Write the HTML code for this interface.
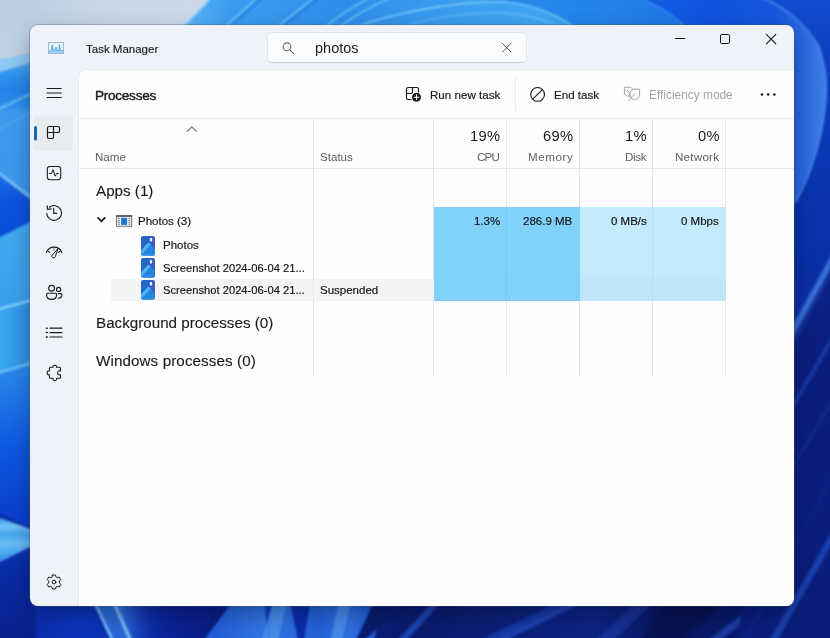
<!DOCTYPE html>
<html>
<head>
<meta charset="utf-8">
<title>Task Manager</title>
<style>
*{box-sizing:border-box;margin:0;padding:0}
html,body{width:830px;height:638px;overflow:hidden;background:#0a2aa0}
body{position:relative;font-family:"Liberation Sans",sans-serif;color:#1b1b1b}
.abs{position:absolute}
.t{position:absolute;white-space:nowrap;line-height:1;will-change:transform}
#wall{position:absolute;left:0;top:0;width:830px;height:638px}
#win{position:absolute;left:30px;top:25px;width:764px;height:581px;border-radius:8px;background:#eff3f9;
 box-shadow:0 0 0 1px rgba(70,85,105,.32),0 9px 22px rgba(0,0,20,.30)}
#content{position:absolute;left:78px;top:69px;width:716px;height:537px;background:#fefefe;border-radius:8px 0 8px 0;
 border-left:1px solid #e6eaf0;border-top:1px solid #e6eaf0}
.hl{position:absolute;height:1px;background:#e8e8e8}
.vl{position:absolute;width:1px;background:#e6e6e6}
.hd{font-size:11.6px;color:#5e5e5e}
.pc{font-size:14.7px;color:#1a1a1a;letter-spacing:.35px}
.rw{font-size:11.5px;color:#151515;-webkit-text-stroke:.18px #151515}
.sc{font-size:11.2px}
.sec{font-size:15.2px;color:#1a1a1a;-webkit-text-stroke:.12px #1a1a1a}
</style>
</head>
<body>
<!-- WALLPAPER -->
<svg id="wall" viewBox="0 0 830 638">
<defs>
<filter id="b1" color-interpolation-filters="sRGB" x="-5%" y="-5%" width="110%" height="110%"><feGaussianBlur stdDeviation="0.8"/></filter>
<filter id="b2" color-interpolation-filters="sRGB" x="-5%" y="-5%" width="110%" height="110%"><feGaussianBlur stdDeviation="1.6"/></filter>
<filter id="b4" color-interpolation-filters="sRGB" x="-10%" y="-10%" width="120%" height="120%"><feGaussianBlur stdDeviation="4"/></filter>
<linearGradient id="lg1" x1="0" x2="0" y1="0" y2="1"><stop offset="0" stop-color="#b9cde1"/><stop offset="1" stop-color="#c2d3e5"/></linearGradient>
<linearGradient id="lg3" x1="0" x2="0" y1="0" y2="1"><stop offset="0" stop-color="#4aa6f2"/><stop offset=".1" stop-color="#2e94ee"/><stop offset=".2" stop-color="#2482ea"/><stop offset=".3" stop-color="#2a8cec"/><stop offset=".36" stop-color="#3d9cf0"/><stop offset="1" stop-color="#3a96ed"/></linearGradient>
<linearGradient id="lg5" x1="0" x2="0" y1="0" y2="1"><stop offset="0" stop-color="#1d6ce6"/><stop offset=".4" stop-color="#0c55e0"/><stop offset="1" stop-color="#0a4cdc"/></linearGradient>
<linearGradient id="lg6" x1="0" x2="0" y1="0" y2="1"><stop offset="0" stop-color="#43aaf1"/><stop offset="1" stop-color="#389fee"/></linearGradient>
<linearGradient id="lg8" x1="0" x2="1" y1="0" y2="0"><stop offset="0" stop-color="#3aaaf1"/><stop offset="1" stop-color="#2a8ae3"/></linearGradient>
<linearGradient id="lg10" x1="0" x2="0" y1="0" y2="1"><stop offset="0" stop-color="#2b8ceb"/><stop offset=".5" stop-color="#0e58e2"/><stop offset="1" stop-color="#083ac8"/></linearGradient>
<linearGradient id="lg11" x1="0" x2="0" y1="0" y2="1"><stop offset="0" stop-color="#2a80e6"/><stop offset=".18" stop-color="#74c6f7"/><stop offset=".36" stop-color="#46a6ef"/><stop offset=".55" stop-color="#6abef5"/><stop offset=".75" stop-color="#4aa6ef"/><stop offset="1" stop-color="#2a7ce2"/></linearGradient>
<linearGradient id="lg12" x1="0" x2="0" y1="0" y2="1"><stop offset="0" stop-color="#0b36b6"/><stop offset=".35" stop-color="#0a2aa2"/><stop offset="1" stop-color="#081f88"/></linearGradient>

<linearGradient id="tgrey" x1="0" x2="1" y1="0" y2="0"><stop offset="0" stop-color="#bccfe2"/><stop offset=".4" stop-color="#c8d7e6"/><stop offset="1" stop-color="#ccdbe9"/></linearGradient>
<linearGradient id="tblue" gradientUnits="userSpaceOnUse" x1="185" x2="830" y1="0" y2="0">
 <stop offset="0" stop-color="#5cb4f5"/><stop offset=".07" stop-color="#3a9cef"/><stop offset=".25" stop-color="#2d8eea"/><stop offset=".42" stop-color="#3a9ef0"/><stop offset=".55" stop-color="#40a6f2"/>
 <stop offset=".59" stop-color="#3ca2f1"/><stop offset=".615" stop-color="#2686ea"/><stop offset=".77" stop-color="#1c76e6"/><stop offset="1" stop-color="#1c76e6"/></linearGradient>
<linearGradient id="tdeep" gradientUnits="userSpaceOnUse" x1="650" x2="830" y1="0" y2="0">
 <stop offset="0" stop-color="#145ce3"/><stop offset=".35" stop-color="#1052dd"/><stop offset=".7" stop-color="#1656dc"/><stop offset=".85" stop-color="#2a6ae2"/><stop offset="1" stop-color="#4682e8"/></linearGradient>
<linearGradient id="trc" x1="0" x2="0" y1="0" y2="1"><stop offset="0" stop-color="#104cd0"/><stop offset="1" stop-color="#0c40c2"/></linearGradient>
<linearGradient id="rarc" gradientUnits="userSpaceOnUse" x1="794" x2="828" y1="0" y2="0"><stop offset="0" stop-color="#1a5cdc"/><stop offset=".6" stop-color="#2a6ce0"/><stop offset="1" stop-color="#4c8cea"/></linearGradient>
<linearGradient id="rdeep" x1="0" x2="0" y1="0" y2="1"><stop offset="0" stop-color="#0e48cc"/><stop offset=".15" stop-color="#0a3cbc"/><stop offset=".3" stop-color="#0a34ae"/><stop offset=".45" stop-color="#0a2ea4"/><stop offset="1" stop-color="#0a2ea4"/></linearGradient>
<linearGradient id="rdark" gradientUnits="userSpaceOnUse" x1="0" x2="0" y1="260" y2="640"><stop offset="0" stop-color="#0b2388"/><stop offset=".3" stop-color="#0a1e7e"/><stop offset="1" stop-color="#0a1e7c"/></linearGradient>
<linearGradient id="bglow" gradientUnits="userSpaceOnUse" x1="115" x2="166" y1="0" y2="0"><stop offset="0" stop-color="#3c80e6"/><stop offset=".35" stop-color="#1e50c8"/><stop offset="1" stop-color="#0a2498" stop-opacity="0"/></linearGradient>
<linearGradient id="bpet" gradientUnits="userSpaceOnUse" x1="215" x2="385" y1="0" y2="0"><stop offset="0" stop-color="#225ed8"/><stop offset=".3" stop-color="#3278e5"/><stop offset=".6" stop-color="#2460d8"/><stop offset=".8" stop-color="#2e70e0"/><stop offset="1" stop-color="#1c4cc4"/></linearGradient>
<linearGradient id="bot" gradientUnits="userSpaceOnUse" x1="0" x2="830" y1="0" y2="0">
 <stop offset="0" stop-color="#0a28a2"/><stop offset=".10" stop-color="#0c34bc"/><stop offset=".18" stop-color="#0a2aa6"/><stop offset=".22" stop-color="#0a2090"/><stop offset=".275" stop-color="#0a1c80"/>
 <stop offset=".46" stop-color="#0a1e78"/><stop offset=".5" stop-color="#0a1a6c"/><stop offset=".72" stop-color="#0c2484"/><stop offset=".8" stop-color="#091660"/><stop offset=".93" stop-color="#0a1c72"/><stop offset="1" stop-color="#0a1e7c"/></linearGradient>
</defs>
<rect x="0" y="0" width="830" height="638" fill="#0a2aa0"/>
<!-- right strip -->
<rect x="786" y="0" width="44" height="638" fill="url(#rdeep)"/>

<!-- bottom strip -->
<rect x="0" y="596" width="830" height="44" fill="url(#bot)"/>
<g filter="url(#b1)">
<polygon points="92.2,598 111.5,598 130.0,640 112.0,640" fill="#2a68d8" opacity="1"/>
<polygon points="111.5,598 151.5,598 170.0,640 130.0,640" fill="url(#bglow)" opacity="1"/>
<polygon points="91.0,598 94.2,598 114.0,640 110.8,640" fill="#74b8f5" opacity="1"/>
<polygon points="110.0,598 113.6,598 132.2,640 128.6,640" fill="#78bcf6" opacity="1"/>
<polygon points="235.0,598 385.0,598 374.0,640 204.0,640" fill="url(#bpet)" opacity="1"/>
<polygon points="264.0,598 272.0,598 269.0,640 268.0,640" fill="#0e3cc0" opacity="1"/>
<polygon points="274.0,598 288.0,598 278.0,640 262.0,640" fill="#4c94ee" opacity="0.8"/>
<polygon points="289.0,598 311.0,598 304.0,640 298.0,640" fill="#0a2ca8" opacity="1"/>
<polygon points="340.0,598 352.0,598 342.0,640 330.0,640" fill="#4a90ec" opacity="0.85"/>
<polygon points="376.0,598 416.0,598 364.0,640 356.0,640" fill="#0a1c70" opacity="1"/>
</g><g filter="url(#b2)">
<polygon points="438.0,596 447.0,596 405.0,642 396.0,642" fill="#1c46b4" opacity="1"/>
<polygon points="572.0,596 598.0,596 502.0,642 476.0,642" fill="#1638a4" opacity="1"/>
<polygon points="586.0,596 595.0,596 501.0,642 492.0,642" fill="#1e48b8" opacity="0.9"/>
<polygon points="642.0,596 660.0,596 612.0,642 594.0,642" fill="#18369c" opacity="0.8"/>
<polygon points="668.0,596 732.0,596 680.0,642 640.0,642" fill="#07124f" opacity="0.85"/>
<polygon points="766.0,596 778.0,596 718.0,642 706.0,642" fill="#1a3ca2" opacity="1"/>
<polygon points="850.0,596 874.0,596 820.0,642 786.0,642" fill="#18389e" opacity="0.9"/>
</g>
<!-- right streaks -->
<g filter="url(#b1)"><polygon points="740,430 834,258 834,660 740,660" fill="url(#rdark)"/></g>
<g filter="url(#b2)"><polygon points="740,422 834,250 834,262 740,434" fill="#3a72da"/>
<polygon points="740,434 834,262 834,270 740,446" fill="#16379f" opacity=".8"/>
<polygon points="740,493 834,332 834,339 740,501" fill="#1a3ca8"/>
<polygon points="740,553 834,396 834,400 740,558" fill="#12308f"/>
<polygon points="740,692 834,528 834,540 740,706" fill="#1a42b0"/>
<polygon points="740,646 834,470 834,476 740,652" fill="#0c2488"/>
</g>
<!-- left strip -->
<g filter="url(#b1)"><polygon points="-2.0,-5.0 36.0,-5.0 36.0,52.8 -2.0,60.4" fill="url(#lg1)" /><polygon points="-2.0,59.3 36.0,53.0 36.0,62.2 -2.0,73.6" fill="#8ec8f3" /><polygon points="-2.0,72.6 36.0,61.2 36.0,203.6 -2.0,174.5" fill="url(#lg3)" /><polygon points="-2.0,108.0 36.0,90.2 36.0,92.6 -2.0,110.6" fill="#6cbaf5" /><polygon points="-2.0,129.1 36.0,108.8 36.0,110.8 -2.0,131.1" fill="#4ea6f0" /><polygon points="-2.0,170.5 36.0,199.6 36.0,204.6 -2.0,175.5" fill="#74bef6" /><polygon points="-2.0,174.5 36.0,203.6 36.0,220.0 -2.0,239.0" fill="url(#lg5)" /><polygon points="-2.0,238.0 36.0,219.0 36.0,299.4 -2.0,309.5" fill="url(#lg6)" /><polygon points="-2.0,308.0 36.0,297.9 36.0,301.4 -2.0,311.5" fill="#86d4fa" /><polygon points="-2.0,310.5 36.0,300.4 36.0,361.2 -2.0,372.6" fill="url(#lg8)" /><polygon points="-2.0,371.6 36.0,360.2 36.0,363.7 -2.0,375.1" fill="#66bcf6" /><polygon points="-2.0,374.6 36.0,363.2 36.0,530.8 -2.0,513.1" fill="url(#lg10)" /><polygon points="-2.0,517.0 36.0,531.0 36.0,547.6 -2.0,565.1" fill="url(#lg11)" /><polygon points="-2.0,563.0 36.0,544.0 36.0,645.0 -2.0,645.0" fill="url(#lg12)" /></g>
<!-- top strip -->
<g filter="url(#b1)">
<rect x="28" y="-3" width="190" height="30" fill="url(#tgrey)"/>
<path d="M211 -3 Q198 12 181 28 H700 V-3 Z" fill="url(#tblue)"/>
<path d="M211 -3 Q198 12 181 28" fill="none" stroke="#a6d8f8" stroke-width="2"/>
<rect x="690" y="-3" width="144" height="60" fill="url(#trc)"/>
<path d="M636 -3 H761 Q800 14 819 47 Q828 75 826 96 Q823 150 796 202 L780 222 V28 H686 Q668 8 636 -3 Z" fill="url(#tdeep)"/>
<path d="M761 -3 Q800 14 819 47 Q828 75 826 96 Q823 150 796 202" fill="none" stroke="#4a88ea" stroke-width="2.2" opacity=".75"/>
<path d="M636 -3 Q668 8 686 28" fill="none" stroke="#3c98f0" stroke-width="1.4" opacity=".7"/>
<path d="M500 1.5 Q545 5 575 28 L600 28 L600 -3 L470 -3 Z" fill="#2282ea" opacity=".85"/>
<g fill="none" stroke="#86d2fa" stroke-width="1.3" opacity=".9">
<path d="M224 28 L258 -3"/><path d="M276 28 L315 -3"/><path d="M324 28 Q345 10 372 -3"/><path d="M338 28 Q362 10 392 -3"/>
<path d="M352 28 Q420 4 500 1.5 Q545 5 575 28"/><path d="M398 28 Q450 12 505 13 Q540 16 560 28" opacity=".6"/>
</g>
<g fill="none" stroke="#1c78e4" stroke-width="3" opacity=".55">
<path d="M229 28 L263 -3"/><path d="M281 28 L320 -3"/>
</g>
</g>
</svg>

<!-- WINDOW -->
<div id="win"></div>
<div id="content"></div>

<!-- TITLE BAR -->
<svg class="abs" style="left:48px;top:42px" width="16" height="12" viewBox="0 0 16 12">
 <rect x=".5" y=".5" width="15" height="11" fill="#e6f2fb" stroke="#9bb9d2" stroke-width="1"/>
 <path d="M1 9.2 L3 8.8 L4.2 3 L5.4 8 L6.6 8.6 L8 5.2 L9 8.8 L10.6 8.8 L11.4 2.6 L12.4 8.6 L15 8.4 L15 11 L1 11 Z" fill="#9ccff2"/>
 <path d="M1 9.2 L3 8.8 L4.2 3 L5.4 8 L6.6 8.6 L8 5.2 L9 8.8 L10.6 8.8 L11.4 2.6 L12.4 8.6 L15 8.4" fill="none" stroke="#3b8fd2" stroke-width=".7"/>
</svg>
<div class="t" id="tTitle" style="left:86.1px;top:43.8px;font-size:11.5px;color:#1a1a1a;-webkit-text-stroke:.15px #1a1a1a">Task Manager</div>

<div class="abs" id="search" style="left:267px;top:32px;width:260px;height:31px;border-radius:5px;background:#f9fbfd;border:1px solid #e3e7ec;border-bottom-color:#c9ced6"></div>
<svg class="abs" style="left:281px;top:41px" width="14" height="14" viewBox="0 0 14 14" fill="none" stroke="#6a6a6a" stroke-width="1.1">
 <circle cx="6" cy="5.8" r="3.9"/><path d="M8.8 8.7 L12.3 12.3" stroke-linecap="round"/>
</svg>
<div class="t" id="tSearch" style="left:314.5px;top:40.8px;font-size:14.5px;color:#1a1a1a">photos</div>
<svg class="abs" style="left:501px;top:42px" width="12" height="12" viewBox="0 0 12 12" fill="none" stroke="#606060" stroke-width="1" stroke-linecap="round">
 <path d="M1.4 1.4 L10 10 M10 1.4 L1.4 10"/>
</svg>

<!-- caption buttons -->
<svg class="abs" style="left:670px;top:29px" width="112" height="20" viewBox="0 0 112 20" fill="none" stroke="#111" stroke-width="1">
 <path d="M5 9.5 H15.2"/>
 <rect x="50.5" y="5.5" width="9" height="9" rx="1.2"/>
 <path d="M96.4 5.4 L105.8 14.8 M105.8 5.4 L96.4 14.8" stroke-linecap="round" stroke-width="1.05"/>
</svg>

<!-- SIDEBAR -->
<svg class="abs" style="left:30px;top:69px" width="48" height="537" viewBox="30 69 48 537" fill="none" stroke="#1a1a1a" stroke-width="1.15" stroke-linecap="round" stroke-linejoin="round">
 <!-- hamburger -->
 <path d="M46.6 88.5 H61.6 M46.6 93 H61.6 M46.6 97.5 H61.6" stroke-width="1" stroke-linecap="butt"/>
 <!-- selected bg -->
 <rect x="34" y="115.5" width="39" height="35" rx="4" fill="#e8ebf0" stroke="none"/>
 <rect x="34" y="126" width="3" height="14.5" rx="1.5" fill="#1467b3" stroke="none"/>
 <!-- processes icon -->
 <path d="M49.1 126.5 H57.9 Q59.5 126.5 59.5 128.1 V130.9 Q59.5 132.5 57.9 132.5 H53.5 V136.9 Q53.5 138.5 51.9 138.5 H49.1 Q47.5 138.5 47.5 136.9 V128.1 Q47.5 126.5 49.1 126.5 Z M53.5 126.5 V132.5 M47.5 132.5 H53.5" stroke-width="1.2"/>
 <!-- performance icon -->
 <rect x="47.3" y="166.5" width="13.4" height="13.2" rx="2.6" stroke-width="1.08"/>
 <path d="M49.6 173.5 H51.6 L53 169.6 L55.2 176.2 L56.6 173.5 H58.4" stroke-width="1"/>
 <!-- app history -->
 <path d="M49.4 207.2 A7.4 7.4 0 1 1 46.7 213.3" stroke-width="1.1"/>
 <path d="M47.3 205.4 V209.2 H51.6" stroke-linejoin="miter" stroke-linecap="butt" stroke-width="1.2"/>
 <path d="M53.7 208.2 V213.4 H56.7" stroke-linejoin="miter" stroke-width="1.1"/>
 <!-- startup (gauge) -->
 <path d="M46.4 252.4 A8.24 8.24 0 0 1 61.8 252.4" stroke-width="1.15"/>
 <path d="M47.7 250.8 L49.6 252.4 M60.5 250.8 L58.6 252.4" stroke-width="1.1"/>
 <path d="M54 248.4 V250.2" stroke="#777" stroke-width="1"/>
 <path d="M57.9 248.6 L52.2 255.2 A1.75 1.75 0 1 0 55.3 256.7 Z" stroke-width="1"/>
 <!-- users -->
 <circle cx="51.6" cy="288.2" r="2.9"/>
 <circle cx="58.6" cy="289.4" r="2.1"/>
 <path d="M47.6 293.2 H55.6 Q56.6 293.2 56.6 294.2 V295 Q56.6 299.4 51.6 299.4 Q46.6 299.4 46.6 295 V294.2 Q46.6 293.2 47.6 293.2 Z"/>
 <path d="M58.4 293.6 H61 Q62 293.6 62 294.6 Q62 298.2 58.2 298.2"/>
 <!-- details -->
 <path d="M50 328.2 H62 M50 332.6 H62 M50 337 H62" stroke-width="1.2"/>
 <path d="M46.4 328.2 H47.2 M46.4 332.6 H47.2 M46.4 337 H47.2" stroke-width="1.5"/>
 <!-- services puzzle -->
 <path d="M50.4 367.3 H53 Q52.7 365.3 54.8 365.3 Q56.9 365.3 56.6 367.3 H59.5 Q60.5 367.3 60.5 368.3 V370.9 Q57.6 370.4 57.6 372.9 Q57.6 375.3 60.5 374.8 V377.3 Q60.5 378.3 59.5 378.3 H56.6 Q56.9 380.6 54.8 380.6 Q52.7 380.6 53 378.3 H50.4 Q49.4 378.3 49.4 377.3 V374.8 Q47.2 375.2 47.2 372.9 Q47.2 370.6 49.4 371 V368.3 Q49.4 367.3 50.4 367.3 Z" stroke-width="1.1"/>
 <!-- settings gear -->
 <g transform="translate(54 582)">
  <path d="M-1.5 -7 H1.5 L2.1 -4.9 L3.3 -4.3 L5.3 -5 L6.8 -2.4 L5.3 -0.9 V0.9 L6.8 2.4 L5.3 5 L3.3 4.3 L2.1 4.9 L1.5 7 H-1.5 L-2.1 4.9 L-3.3 4.3 L-5.3 5 L-6.8 2.4 L-5.3 0.9 V-0.9 L-6.8 -2.4 L-5.3 -5 L-3.3 -4.3 L-2.1 -4.9 Z" stroke-width="1"/>
  <circle cx="0" cy="0" r="1.9" stroke-width="1"/>
 </g>
</svg>

<!-- TOOLBAR -->
<div class="t" id="tProc" style="left:95px;top:88.6px;font-size:13.6px;letter-spacing:-.28px;color:#1a1a1a;-webkit-text-stroke:.4px #1a1a1a">Processes</div>
<svg class="abs" style="left:404px;top:85px" width="20" height="20" viewBox="404 85 20 20" fill="none" stroke="#1a1a1a" stroke-width="1.1" stroke-linejoin="round">
 <path d="M408 87.5 H417 Q418.5 87.5 418.5 89 V92.2 M411.6 99.5 H408 Q406.5 99.5 406.5 98 V89 Q406.5 87.5 408 87.5 M412.5 87.5 V92 Q412.5 93.5 411 93.5 H406.5" stroke-width="1.2"/>
 <circle cx="416.5" cy="97.3" r="4.5" fill="#1a1a1a" stroke="none"/>
 <path d="M414.1 97.3 H418.9 M416.5 94.9 V99.7" stroke="#fff" stroke-width="1.1" stroke-linecap="round"/>
</svg>
<div class="t" id="tRun" style="left:429.5px;top:89px;font-size:11.6px;-webkit-text-stroke:.18px #151515">Run new task</div>
<div class="vl" style="left:515px;top:78px;height:33px;background:#ebebeb"></div>
<svg class="abs" style="left:528px;top:85px" width="20" height="20" viewBox="528 85 20 20" fill="none" stroke="#1a1a1a" stroke-width="1.1">
 <circle cx="537.6" cy="94.4" r="6.9"/><path d="M532.8 99.2 L542.4 89.6"/>
</svg>
<div class="t" id="tEnd" style="left:554px;top:89px;font-size:11.6px;-webkit-text-stroke:.18px #151515">End task</div>
<svg class="abs" style="left:622px;top:85px" width="20" height="18" viewBox="622 85 20 18" fill="none" stroke="#a6a6a6" stroke-width="1" stroke-linejoin="round" stroke-linecap="round">
 <path d="M632.4 89 Q631.4 87.2 629.6 87.2 H624.4 V93 Q624.4 96 629 96.4"/>
 <path d="M627.1 90.1 L629.3 92.3 V96.2"/>
 <path d="M634.4 89.2 H639.6 V94.6 Q639.4 99.4 634.4 99.5 Q630.2 99.2 630.2 95.4 V93.4 Q630.2 89.2 634.4 89.2 Z"/>
 <path d="M634.8 93.8 L628.3 100.7"/>
</svg>
<div class="t" id="tEff" style="left:648.5px;top:89.7px;font-size:11.9px;color:#a2a2a2">Efficiency mode</div>
<svg class="abs" style="left:758px;top:90px" width="20" height="10" viewBox="758 90 20 10" fill="#1a1a1a">
 <circle cx="762" cy="94.6" r="1.25"/><circle cx="768.2" cy="94.6" r="1.25"/><circle cx="774.4" cy="94.6" r="1.25"/>
</svg>
<div class="hl" style="left:79px;top:118px;width:715px;background:#ececec"></div>

<!-- TABLE HEADER -->
<svg class="abs" style="left:185px;top:124px" width="14" height="10" viewBox="0 0 14 10" fill="none" stroke="#707070" stroke-width="1.15"><path d="M2 7.6 L6.8 2.8 L11.6 7.6"/></svg>
<div class="t hd" id="tName" style="left:95.3px;top:151px">Name</div>
<div class="t hd" id="tStatus" style="left:320px;top:151px">Status</div>
<div class="t pc" id="p1" style="right:329.8px;top:129px">19%</div>
<div class="t hd" id="h1" style="right:330.5px;top:151px;letter-spacing:-.8px">CPU</div>
<div class="t pc" id="p2" style="right:256.6px;top:129px">69%</div>
<div class="t hd" id="h2" style="right:256.4px;top:151px;letter-spacing:.6px">Memory</div>
<div class="t pc" id="p3" style="right:183.2px;top:129px">1%</div>
<div class="t hd" id="h3" style="right:183.6px;top:151px;letter-spacing:-.3px">Disk</div>
<div class="t pc" id="p4" style="right:110.2px;top:129px">0%</div>
<div class="t hd" id="h4" style="right:110.7px;top:151px;letter-spacing:.25px">Network</div>
<div class="hl" style="left:79px;top:168px;width:715px"></div>
<!-- column lines -->
<div class="vl" style="left:313px;top:119px;height:258px"></div>
<div class="vl" style="left:433px;top:119px;height:258px"></div>
<div class="vl" style="left:506px;top:119px;height:258px"></div>
<div class="vl" style="left:579px;top:119px;height:258px"></div>
<div class="vl" style="left:652px;top:119px;height:258px"></div>
<div class="vl" style="left:725px;top:119px;height:258px"></div>

<!-- ROWS -->
<div class="abs" style="left:111px;top:279px;width:323px;height:21.5px;background:#f4f4f4"></div>
<div class="vl" style="left:313px;top:279px;height:22px;background:#e9e9e9"></div>
<div class="abs" style="left:434px;top:207px;width:146px;height:93.5px;background:#81d2fa"></div>
<div class="abs" style="left:580px;top:207px;width:146px;height:72px;background:#c4eafd"></div>
<div class="abs" style="left:580px;top:279px;width:146px;height:21.5px;background:#bfe5f9"></div>
<div class="abs" style="left:434px;top:279px;width:146px;height:21.5px;background:#80d1f9"></div>
<div class="vl" style="left:579px;top:207px;height:93.5px;background:#8ccbf0"></div>
<div class="vl" style="left:506px;top:207px;height:93.5px;background:#79c9f2"></div>
<div class="vl" style="left:652px;top:207px;height:93.5px;background:#b8e0f5"></div>

<div class="t sec" id="sApps" style="left:96px;top:182.9px">Apps (1)</div>
<svg class="abs" style="left:95px;top:214px" width="14" height="12" viewBox="95 214 14 12" fill="none" stroke="#1a1a1a" stroke-width="1.75" stroke-linejoin="miter"><path d="M97.5 217.4 L101.4 221.2 L105.3 217.4"/></svg>
<svg class="abs" style="left:116px;top:215px" width="17" height="12" viewBox="0 0 17 12">
 <rect x=".5" y=".8" width="15.2" height="10.5" fill="#f0f8fd" stroke="#6e6e6e" stroke-width="1"/>
 <rect x="0" y=".2" width="16.2" height="1.7" fill="#5a5a5a"/>
 <rect x="5.1" y="2.8" width="6" height="7.1" fill="#1e74d0"/>
 <path d="M1.9 3.4 H3.8 M1.9 5.4 H3.8 M1.9 7.3 H3.8 M1.9 9.2 H3.8 M12.4 3.4 H14.3 M12.4 5.4 H14.3 M12.4 7.3 H14.3 M12.4 9.2 H14.3" stroke="#6a6a6a" stroke-width="1"/>
</svg>
<div class="t rw" id="r0" style="left:138.4px;top:215.5px">Photos (3)</div>
<div class="t rw" id="v1" style="right:329.8px;top:215.5px">1.3%</div>
<div class="t rw" id="v2" style="right:257.3px;top:215.5px">286.9 MB</div>
<div class="t rw" id="v3" style="right:183.7px;top:215.5px">0 MB/s</div>
<div class="t rw" id="v4" style="right:111.2px;top:215.5px">0 Mbps</div>

<svg width="0" height="0" style="position:absolute"><defs>
 <symbol id="ph" viewBox="0 0 14 20">
  <linearGradient id="phg" x1="0" x2="1" y1="0" y2="0"><stop offset="0" stop-color="#2168c8"/><stop offset=".6" stop-color="#2a62c4"/><stop offset="1" stop-color="#4c58c2"/></linearGradient>
  <clipPath id="phc"><rect x="0" y="0" width="14" height="19.6" rx="2"/></clipPath>
  <g clip-path="url(#phc)">
   <rect width="14" height="20" fill="url(#phg)"/>
   <path d="M0 14.6 L6.6 7.2 Q7.3 6.4 8 7.1 L14 13 V20 H0 Z" fill="#2485e0"/>
   <path d="M0 14.4 L6.6 7.1 Q7.3 6.4 8 7.1 L9.8 8.8 L0 19 Z" fill="#49b3f4"/>
   <path d="M0 17.4 L14 17 V20 H0 Z" fill="#2a8ee6" opacity=".9"/>
   <rect x="8.8" y="2.1" width="2.3" height="3.4" rx=".7" fill="#f4f9ff"/>
  </g>
 </symbol>
</defs></svg>
<svg class="abs" style="left:141px;top:236px" width="14" height="20"><use href="#ph"/></svg>
<svg class="abs" style="left:141px;top:258.4px" width="14" height="20"><use href="#ph"/></svg>
<svg class="abs" style="left:141px;top:280px" width="14" height="20"><use href="#ph"/></svg>
<div class="t rw" id="r1" style="left:162.6px;top:240.3px">Photos</div>
<div class="t rw sc" id="r2" style="left:162.6px;top:262.6px">Screenshot 2024-06-04 21...</div>
<div class="t rw sc" id="r3" style="left:162.6px;top:284.8px">Screenshot 2024-06-04 21...</div>
<div class="t rw" id="r4" style="left:320px;top:284.8px">Suspended</div>
<div class="t sec" id="sBg" style="left:96.4px;top:315px">Background processes (0)</div>
<div class="t sec" id="sWin" style="left:96.4px;top:352.8px;letter-spacing:.1px">Windows processes (0)</div>

</body>
</html>
